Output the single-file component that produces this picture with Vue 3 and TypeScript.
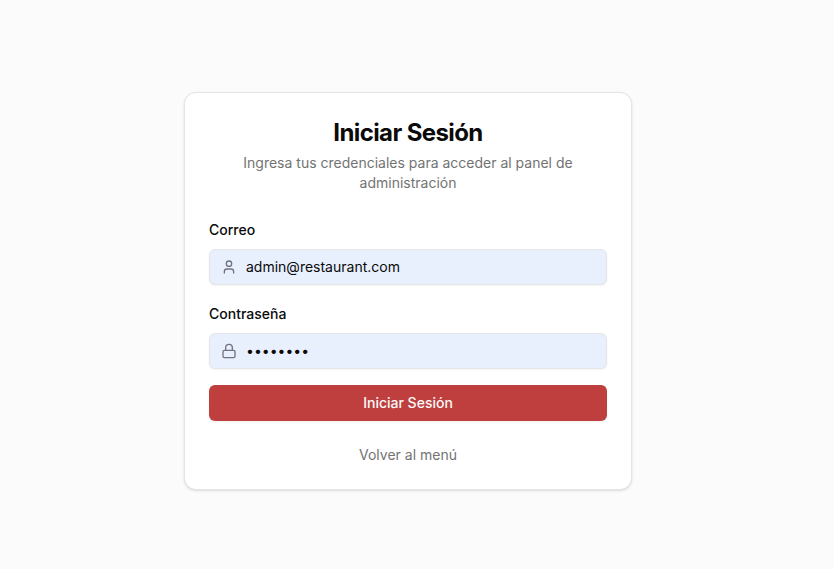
<script setup lang="ts">
import { ref } from 'vue'

const email = ref<string>('admin@restaurant.com')
const password = ref<string>('password')
</script>

<template>
  <main class="page">
    <section class="card">
      <header class="header">
        <h1 class="title">Iniciar Sesión</h1>
        <p class="description">Ingresa tus credenciales para acceder al panel de administración</p>
      </header>
      <form class="form" @submit.prevent>
        <div class="field">
          <label for="email">Correo</label>
          <div class="control">
            <svg class="icon" viewBox="0 0 24 24" aria-hidden="true">
              <path d="M19 21v-2a4 4 0 0 0-4-4H9a4 4 0 0 0-4 4v2" />
              <circle cx="12" cy="7" r="4" />
            </svg>
            <input id="email" v-model="email" type="email" />
          </div>
        </div>
        <div class="field">
          <label for="password">Contraseña</label>
          <div class="control">
            <svg class="icon" viewBox="0 0 24 24" aria-hidden="true">
              <rect width="18" height="11" x="3" y="11" rx="2" />
              <path d="M7 11V7a5 5 0 0 1 10 0v4" />
            </svg>
            <input id="password" v-model="password" type="password" />
          </div>
        </div>
        <button class="submit" type="submit">Iniciar Sesión</button>
      </form>
      <a class="back">Volver al menú</a>
    </section>
  </main>
</template>

<style>
body {
  background: #fbfbfb;
}
</style>

<style scoped>
.page {
  box-sizing: border-box;
  min-height: 100vh;
  padding: 92px 0 0 184px;
  font-family: Inter, sans-serif;
  font-size: 14px;
  line-height: 20px;
  color: #0a0a0a;
}
.card {
  box-sizing: border-box;
  width: 448px;
  height: 398px;
  padding: 24px;
  display: flex;
  flex-direction: column;
  background: #fff;
  border: 1px solid #e5e5e5;
  border-radius: 12px;
  box-shadow: 0 1px 3px rgba(0, 0, 0, 0.1), 0 1px 2px -1px rgba(0, 0, 0, 0.1);
}
.header {
  text-align: center;
}
.title {
  margin: 0 0 4px;
  font-size: 24px;
  line-height: 32px;
  font-weight: 700;
  letter-spacing: -0.6px;
}
.description {
  margin: 0;
  color: #737373;
}
.form {
  display: flex;
  flex-direction: column;
  gap: 16px;
  margin-top: 30px;
}
.field {
  display: flex;
  flex-direction: column;
  gap: 12px;
}
.field + .field {
  padding-top: 6px;
}
label {
  line-height: 14px;
  height: 14px;
  font-weight: 500;
}
.control {
  box-sizing: border-box;
  display: flex;
  align-items: center;
  height: 36px;
  padding: 0 11px;
  gap: 9px;
  background: #e8f0fe;
  border: 1px solid #e5e5e5;
  border-radius: 6px;
  box-shadow: 0 1px 2px rgba(0, 0, 0, 0.05);
}
.icon {
  flex: none;
  width: 16px;
  height: 16px;
  fill: none;
  stroke: #737380;
  stroke-width: 2;
  stroke-linecap: round;
  stroke-linejoin: round;
}
input {
  flex: 1;
  min-width: 0;
  padding: 0;
  border: 0;
  outline: 0;
  background: transparent;
  font: inherit;
  color: #0a0a0a;
}
.submit {
  height: 36px;
  padding: 0;
  border: 0;
  border-radius: 6px;
  background: #bf3f3f;
  color: #fafafa;
  font: inherit;
  font-weight: 500;
  box-shadow: 0 1px 2px rgba(0, 0, 0, 0.05);
}
.back {
  align-self: center;
  margin-top: 24px;
  color: #737373;
}
</style>
